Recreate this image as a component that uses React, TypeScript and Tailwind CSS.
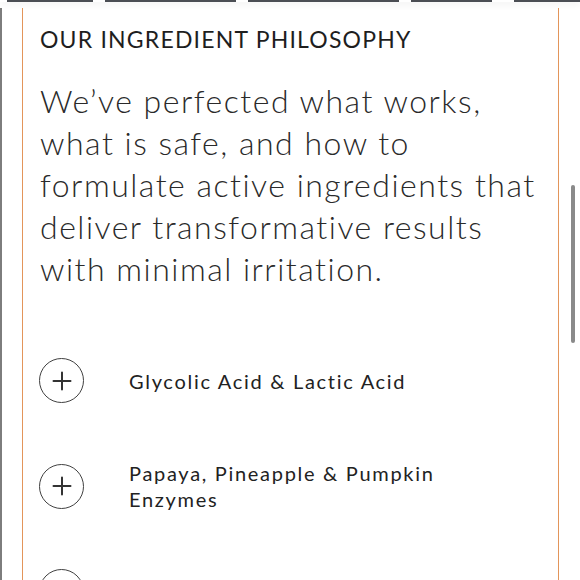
import React from 'react';

const ingredients = [
  'Glycolic Acid & Lactic Acid',
  'Papaya, Pineapple & Pumpkin Enzymes',
  'Vitamin C',
];

const PlusCircle: React.FC = () => (
  <span className="flex h-[45px] w-[45px] shrink-0 items-center justify-center rounded-full border-[1.5px] border-[#404040]">
    <svg width="20" height="20" viewBox="0 0 20 20" fill="none" stroke="#333" strokeWidth="2" strokeLinecap="round">
      <path d="M10 1.5v17M1.5 10h17" />
    </svg>
  </span>
);

export default function App() {
  return (
    <div
      className="relative h-[580px] w-[580px] overflow-hidden bg-white text-[#222] [font-variant-ligatures:none]"
      style={{ fontFamily: 'Lato, "Open Sans", sans-serif' }}
    >
      {/* tab strip at the very top */}
      <div className="relative z-10 flex h-[2px] gap-[12px] pl-[7px] shadow-[0_2px_6px_rgba(0,0,0,0.12)]">
        <div className="w-[86px] bg-[#4b4e54]" />
        <div className="w-[131px] bg-[#4b4e54]" />
        <div className="w-[151px] bg-[#4b4e54]" />
        <div className="w-[81px] bg-[#4b4e54]" />
        <div className="ml-[10px] flex-1 bg-[#4b4e54]" />
      </div>

      <div className="flex h-[578px] pt-[6px]">
        <div className="w-[2px] bg-[#7d7d7d]" />
        <section className="ml-[20px] w-[537px] border-x-[1.5px] border-[#e3955a] pl-[16px] pr-2 pt-[18px]">
          <h2 className="pl-px text-[23px] leading-[26px] tracking-[1.2px] text-[#1e1e1e]">OUR INGREDIENT PHILOSOPHY</h2>
          <p className="mt-[28px] pl-px text-[32px] font-light leading-[42px] tracking-[1.5px] text-[#2a2a2a]">
            We’ve perfected what works, what is safe, and how to formulate active ingredients that deliver
            transformative results with minimal irritation.
          </p>

          <ul className="mt-[68px] flex flex-col gap-[57px]">
            {ingredients.map((name) => (
              <li key={name} className="flex items-center gap-[45px]">
                <PlusCircle />
                <span className="max-w-[330px] text-[20px] leading-[26px] tracking-[1.7px] text-[#222]">{name}</span>
              </li>
            ))}
          </ul>
        </section>
      </div>

      {/* scrollbar thumb */}
      <div className="absolute left-[571px] top-[185px] h-[158px] w-[4px] rounded-full bg-[#8a8a8a]" />
    </div>
  );
}
